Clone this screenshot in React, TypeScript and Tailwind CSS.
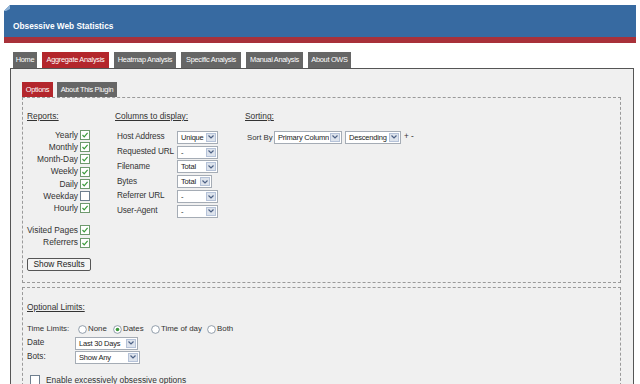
import React from "react";

const font = { fontFamily: '"Liberation Sans", Arial, sans-serif' };

function Check({ checked = true }: { checked?: boolean }) {
  return (
    <svg width="10" height="10" viewBox="0 0 10 10" className="shrink-0">
      <rect x="0.5" y="0.5" width="9" height="9" fill="#fff" stroke={checked ? "#6f9a6f" : "#6f7f8f"} />
      {checked && <path d="M2.5 5 L4.2 6.8 L7.6 2.8" fill="none" stroke="#3a9a3a" strokeWidth="1.2" />}
    </svg>
  );
}

function Radio({ checked = false }: { checked?: boolean }) {
  return (
    <svg width="9" height="9" viewBox="0 0 10 10" className="shrink-0">
      <circle cx="5" cy="5" r="4.3" fill="#fff" stroke="#7a8a9a" strokeWidth="0.9" />
      {checked && <circle cx="5" cy="5" r="2" fill="#3c9a3c" />}
    </svg>
  );
}

function Select({ value, w }: { value: string; w: string }) {
  return (
    <div className={`flex h-[13px] shrink-0 items-stretch border border-[#a5acb5] bg-white ${w}`}>
      <div className="flex-1 overflow-hidden whitespace-nowrap pl-[3px] text-[7.5px] leading-[11px] tracking-[-0.2px] text-[#222]">{value}</div>
      <div className="m-[1px] flex w-[10px] items-center justify-center border border-[#b5c2d8] bg-[#dde3ec]">
        <svg width="6" height="4" viewBox="0 0 6 4">
          <path d="M0.5 0.5 L3 3 L5.5 0.5" fill="none" stroke="#4d6185" strokeWidth="1.2" />
        </svg>
      </div>
    </div>
  );
}

function ReportRow({ label, checked = true }: { label: string; checked?: boolean }) {
  return (
    <div className="flex h-[12.2px] items-center justify-end gap-[2px] pr-[25px]">
      <span className="whitespace-nowrap text-[8.4px] text-[#333]">{label}</span>
      <Check checked={checked} />
    </div>
  );
}

function ColRow({ label, value, w }: { label: string; value: string; w: string }) {
  return (
    <div className="flex h-[14.8px] items-center">
      <span className="w-[62px] shrink-0 whitespace-nowrap pl-[2px] text-[8.2px] tracking-[-0.1px] text-[#333]">{label}</span>
      <Select value={value} w={w} />
    </div>
  );
}

export default function App() {
  const tabs: [string, string][] = [
    ["Home", "w-[24px]"],
    ["Aggregate Analysis", "w-[67px]"],
    ["Heatmap Analysis", "w-[62px]"],
    ["Specific Analysis", "w-[60px]"],
    ["Manual Analysis", "w-[57px]"],
    ["About OWS", "w-[43px]"],
  ];
  return (
    <div className="relative h-[384px] w-[640px] overflow-hidden bg-white" style={font}>
      {/* header */}
      <div className="relative ml-[4px] mt-[5px] w-[632px]">
        <div className="flex h-[32px] items-end bg-[#376aa1] pb-[6px] pl-[9px]">
          <span className="text-[8.3px] font-bold leading-[10px] text-white">Obsessive Web Statistics</span>
        </div>
        <div className="h-[6px] bg-[#a8313a]" />
        <svg className="absolute left-0 top-0" width="6" height="6" viewBox="0 0 6 6">
          <path d="M0 0 L6 0 L0 6 Z" fill="#fff" />
          <path d="M0 6 L6 0 L6 4 L2 6 Z" fill="#8fb3d8" />
        </svg>
      </div>

      {/* tabs */}
      <div className="mt-[9px] flex gap-[5px] pl-[13px]">
        {tabs.map(([t, w], i) => (
          <div
            key={t}
            className={`flex h-[16px] items-center justify-center whitespace-nowrap text-[7.4px] tracking-[-0.3px] text-white ${w} ${i === 1 ? "bg-[#b3262c]" : "bg-[#666666]"}`}
          >
            {t}
          </div>
        ))}
      </div>

      {/* panel */}
      <div className="ml-[10px] h-[400px] w-[624px] border border-[#555] bg-[#f0f0f0] pl-[11px] pt-[13px]">
        <div className="flex gap-[4px]">
          <div className="flex h-[15px] w-[31px] items-center justify-center bg-[#b3262c] text-[7.4px] tracking-[-0.3px] text-white">Options</div>
          <div className="flex h-[15px] w-[60px] items-center justify-center bg-[#666666] text-[7.4px] tracking-[-0.3px] text-white">About This Plugin</div>
        </div>

        {/* box 1 */}
        <div className="h-[186px] w-[599px] border border-dashed border-[#9a9a9a] pl-[4px] pt-[12px]">
          <div className="flex">
            <div className="w-[88px] shrink-0">
              <div className="h-[12px] text-[8.4px] leading-[12px] text-[#333] underline">Reports:</div>
              <div className="mt-[7px]">
                <ReportRow label="Yearly" />
                <ReportRow label="Monthly" />
                <ReportRow label="Month-Day" />
                <ReportRow label="Weekly" />
                <ReportRow label="Daily" />
                <ReportRow label="Weekday" checked={false} />
                <ReportRow label="Hourly" />
              </div>
              <div className="mt-[10px]">
                <ReportRow label="Visited Pages" />
                <ReportRow label="Referrers" />
              </div>
              <div className="mt-[9px] flex h-[13px] w-[64px] items-center justify-center rounded-[2px] border border-[#555] bg-[#f4f4f4] text-[8.4px] text-[#222]">
                Show Results
              </div>
            </div>
            <div className="w-[130px] shrink-0">
              <div className="h-[12px] whitespace-nowrap text-[8.4px] leading-[12px] text-[#333] underline">Columns to display:</div>
              <div className="mt-[8px]">
                <ColRow label="Host Address" value="Unique" w="w-[41px]" />
                <ColRow label="Requested URL" value="-" w="w-[41px]" />
                <ColRow label="Filename" value="Total" w="w-[41px]" />
                <ColRow label="Bytes" value="Total" w="w-[35px]" />
                <ColRow label="Referrer URL" value="-" w="w-[41px]" />
                <ColRow label="User-Agent" value="-" w="w-[41px]" />
              </div>
            </div>
            <div>
              <div className="h-[12px] text-[8.4px] leading-[12px] text-[#333] underline">Sorting:</div>
              <div className="mt-[8px] flex h-[14.8px] items-center pl-[2px]">
                <span className="w-[27px] whitespace-nowrap text-[7.8px] text-[#333]">Sort By</span>
                <Select value="Primary Column" w="w-[68px]" />
                <div className="w-[3px]" />
                <Select value="Descending" w="w-[56px]" />
                <span className="ml-[3px] text-[8.2px] text-[#333]">+ -</span>
              </div>
            </div>
          </div>
        </div>

        {/* box 2 */}
        <div className="mt-[4px] h-[200px] w-[599px] border border-dashed border-[#9a9a9a] pl-[4px] pt-[13px]">
          <div className="h-[12px] text-[8.4px] leading-[12px] text-[#333] underline">Optional Limits:</div>
          <div className="mt-[9px] flex h-[14px] items-center whitespace-nowrap text-[7.9px] text-[#333]">
            <span className="w-[51px]">Time Limits:</span>
            <Radio />
            <span className="ml-[1px] w-[25px]">None</span>
            <Radio checked />
            <span className="ml-[1px] w-[28px]">Dates</span>
            <Radio />
            <span className="ml-[1px] w-[46px]">Time of day</span>
            <Radio />
            <span className="ml-[1px]">Both</span>
          </div>
          <div className="flex h-[14px] items-center text-[8.2px] text-[#333]">
            <span className="w-[48px]">Date</span>
            <Select value="Last 30 Days" w="w-[63px]" />
          </div>
          <div className="flex h-[14px] items-center text-[8.2px] text-[#333]">
            <span className="w-[48px]">Bots:</span>
            <Select value="Show Any" w="w-[65px]" />
          </div>
          <div className="mt-[10px] flex items-center gap-[6px] pl-[3px] text-[8.4px] text-[#333]">
            <Check checked={false} />
            <span>Enable excessively obsessive options</span>
          </div>
        </div>
      </div>
    </div>
  );
}
